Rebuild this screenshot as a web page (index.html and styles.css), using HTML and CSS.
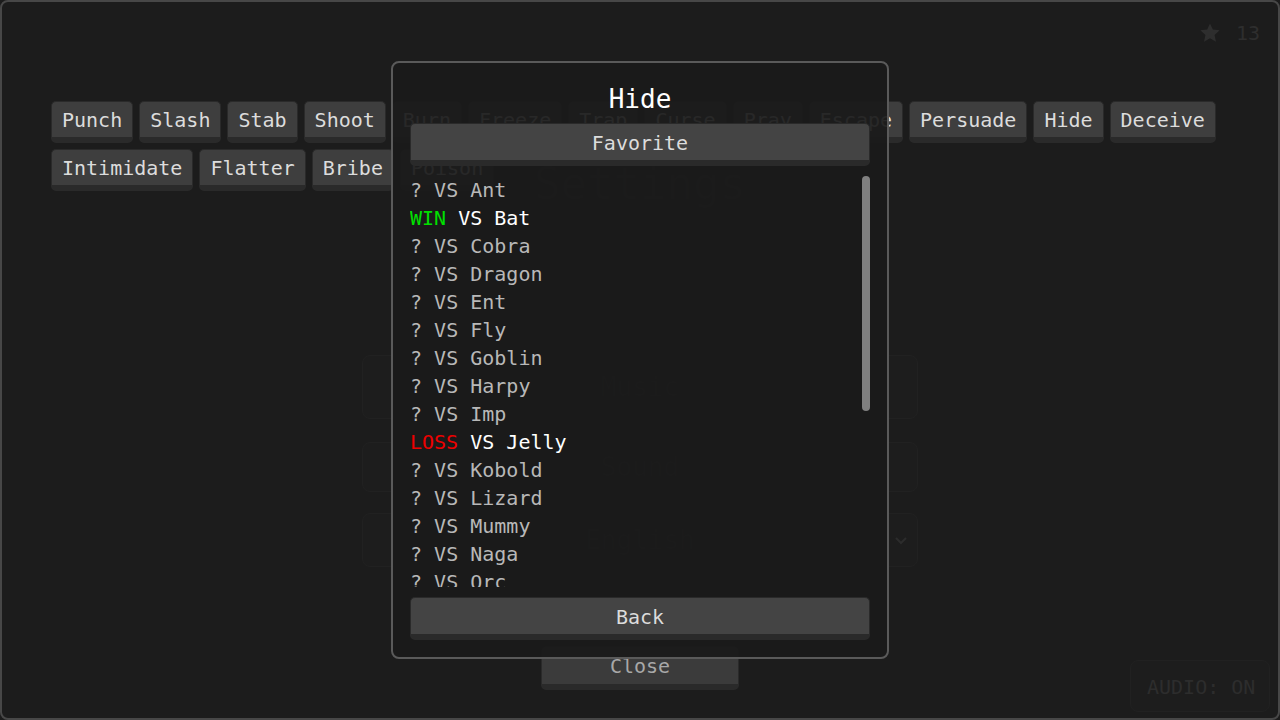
FILE: index.html
```html
<!DOCTYPE html>
<html lang="en">
<head>
    <meta charset="UTF-8">
    <meta name="viewport" content="width=device-width, initial-scale=1.0">
    <title>Skills</title>
    <link rel="stylesheet" href="styles.css">
</head>
<body>
    <div class="screen">
        <div class="hud">
            <svg class="star" viewBox="0 0 24 24"><polygon points="12,1.5 15.1,8.2 22.5,9 17,14.1 18.5,21.5 12,17.8 5.5,21.5 7,14.1 1.5,9 8.9,8.2"/></svg>
            <span>13</span>
        </div>

        <div class="skills">
            <button class="skill">Punch</button>
            <button class="skill">Slash</button>
            <button class="skill">Stab</button>
            <button class="skill">Shoot</button>
            <button class="skill">Burn</button>
            <button class="skill">Freeze</button>
            <button class="skill">Trap</button>
            <button class="skill">Curse</button>
            <button class="skill">Pray</button>
            <button class="skill">Escape</button>
            <button class="skill">Persuade</button>
            <button class="skill">Hide</button>
            <button class="skill">Deceive</button>
            <button class="skill">Intimidate</button>
            <button class="skill">Flatter</button>
            <button class="skill">Bribe</button>
            <button class="skill">Poison</button>
        </div>

        <div class="spacer"></div>

        <div class="footer">
            <div class="audio">AUDIO: ON</div>
        </div>

        
        <div class="settings">
            <div class="settings-title">Settings</div>
            <div class="card card-music"><span>Music</span></div>
            <div class="card card-sound"><span>Sound</span></div>
            <div class="card card-lang">
                <span>English</span>
                <svg class="chevron" viewBox="0 0 12 8"><polyline points="1,1 6,6 11,1"/></svg>
            </div>
            <button class="close-btn">Close</button>
        </div>

        <div class="modal">
            <div class="modal-title">Hide</div>
            <button class="wide">Favorite</button>
            <div class="vs-wrap">
                <div class="vs-list">
                    <div class="vs-row"><span class="res">?</span> VS Ant</div>
                    <div class="vs-row done"><span class="res win">WIN</span> VS Bat</div>
                    <div class="vs-row"><span class="res">?</span> VS Cobra</div>
                    <div class="vs-row"><span class="res">?</span> VS Dragon</div>
                    <div class="vs-row"><span class="res">?</span> VS Ent</div>
                    <div class="vs-row"><span class="res">?</span> VS Fly</div>
                    <div class="vs-row"><span class="res">?</span> VS Goblin</div>
                    <div class="vs-row"><span class="res">?</span> VS Harpy</div>
                    <div class="vs-row"><span class="res">?</span> VS Imp</div>
                    <div class="vs-row done"><span class="res loss">LOSS</span> VS Jelly</div>
                    <div class="vs-row"><span class="res">?</span> VS Kobold</div>
                    <div class="vs-row"><span class="res">?</span> VS Lizard</div>
                    <div class="vs-row"><span class="res">?</span> VS Mummy</div>
                    <div class="vs-row"><span class="res">?</span> VS Naga</div>
                    <div class="vs-row"><span class="res">?</span> VS Orc</div>
                    <div class="vs-row"><span class="res">?</span> VS Pixie</div>
                    <div class="vs-row"><span class="res">?</span> VS Quasit</div>
                    <div class="vs-row"><span class="res">?</span> VS Rat</div>
                    <div class="vs-row"><span class="res">?</span> VS Slime</div>
                    <div class="vs-row"><span class="res">?</span> VS Troll</div>
                    <div class="vs-row"><span class="res">?</span> VS Unicorn</div>
                    <div class="vs-row"><span class="res">?</span> VS Vampire</div>
                    <div class="vs-row"><span class="res">?</span> VS Wolf</div>
                    <div class="vs-row"><span class="res">?</span> VS Xorn</div>
                    <div class="vs-row"><span class="res">?</span> VS Yeti</div>
                    <div class="vs-row"><span class="res">?</span> VS Zombie</div>
                </div>
                <div class="thumb"></div>
            </div>
            <button class="wide back">Back</button>
        </div>
    </div>
</body>
</html>
```

FILE: styles.css
```css
html, body {
    margin: 0;
    padding: 0;
    background-color: #1c1c1c;
}

body {
    font-family: "DejaVu Sans Mono", "Liberation Mono", monospace;
    font-size: 20px;
    color: #dcdcdc;
}

.screen {
    position: relative;
    box-sizing: border-box;
    width: 1280px;
    height: 720px;
    border: 2px solid #474747;
    border-radius: 8px;
    padding: 20px 8px 6px 49px;
    display: flex;
    flex-direction: column;
    overflow: hidden;
}

/* top right counter */
.hud {
    display: flex;
    justify-content: flex-end;
    align-items: center;
    gap: 15px;
    margin-right: 10px;
    height: 22px;
    color: #2e2e2e;
}

.star {
    width: 22px;
    height: 22px;
    fill: #2e2e2e;
}

.skills {
    display: flex;
    flex-wrap: wrap;
    gap: 6px;
    margin-top: 57px;
}

.skill,
.wide,
.close-btn {
    box-sizing: border-box;
    font-family: "DejaVu Sans Mono", "Liberation Mono", monospace;
    font-size: 20px;
    color: #dcdcdc;
    background-color: #3e3e3e;
    border: 1px solid #2a2a2a;
    border-bottom-width: 6px;
    border-radius: 5px;
    margin: 0;
}

.skill {
    height: 42px;
    line-height: 34px;
    padding: 1px 10px 0;
}

.spacer {
    flex: 1;
}

.footer {
    display: flex;
    justify-content: flex-end;
}

.audio {
    box-sizing: border-box;
    width: 140px;
    height: 52px;
    border: 1px solid #212121;
    border-radius: 8px;
    background-color: #1d1d1d;
    color: #2d2d2d;
    padding-left: 16px;
    line-height: 52px;
}

/* settings panel underneath the popup */
.settings {
    position: absolute;
    left: 360px;
    top: 158px;
    width: 556px;
    display: flex;
    flex-direction: column;
    align-items: center;
}

.settings-title {
    font-size: 44px;
    line-height: 48px;
    color: #2a2a2a;
    margin-bottom: 147px;
}

.card {
    box-sizing: border-box;
    width: 100%;
    border: 1px solid #212121;
    border-radius: 8px;
    background-color: #1d1d1d;
    color: #2a2a2a;
    display: flex;
    align-items: center;
    justify-content: center;
    position: relative;
    font-size: 26px;
}

.card-music {
    height: 64px;
}

.card-sound {
    height: 50px;
    margin-top: 23px;
}

.card-lang {
    height: 54px;
    margin-top: 21px;
}

.chevron {
    position: absolute;
    right: 10px;
    top: 23px;
    width: 12px;
    height: 8px;
    fill: none;
    stroke: #2c2c2c;
    stroke-width: 2;
}

.close-btn {
    width: 198px;
    height: 44px;
    line-height: 36px;
    padding: 0;
    margin-top: 79px;
    color: #a8a8a8;
    background-color: #3b3b3b;
}

/* popup */
.modal {
    position: absolute;
    left: 389px;
    top: 59px;
    box-sizing: border-box;
    width: 498px;
    height: 598px;
    border: 2px solid #5a5a5a;
    border-radius: 8px;
    background-color: rgba(26, 26, 26, 0.93);
    padding: 19px 17px 17px 17px;
    display: flex;
    flex-direction: column;
}

.modal-title {
    font-size: 26px;
    line-height: 34px;
    text-align: center;
    color: #ffffff;
    margin-bottom: 7px;
}

.wide {
    width: 100%;
    height: 43px;
    line-height: 34px;
    padding: 2px 0 0;
    background-color: #444444;
    flex-shrink: 0;
}

.back {
    margin-top: 10px;
}

.vs-wrap {
    position: relative;
    height: 411px;
    margin-top: 10px;
    flex-shrink: 0;
}

.vs-list {
    height: 100%;
    overflow: hidden;
}

.thumb {
    position: absolute;
    right: 0;
    top: 0;
    width: 8px;
    height: 235px;
    border-radius: 4px;
    background-color: #808080;
}

.vs-row {
    line-height: 28px;
    white-space: pre;
    color: #b8b8b8;
}

.vs-row.done {
    color: #ffffff;
}

.win {
    color: #00e000;
}

.loss {
    color: #ee0000;
}
```
